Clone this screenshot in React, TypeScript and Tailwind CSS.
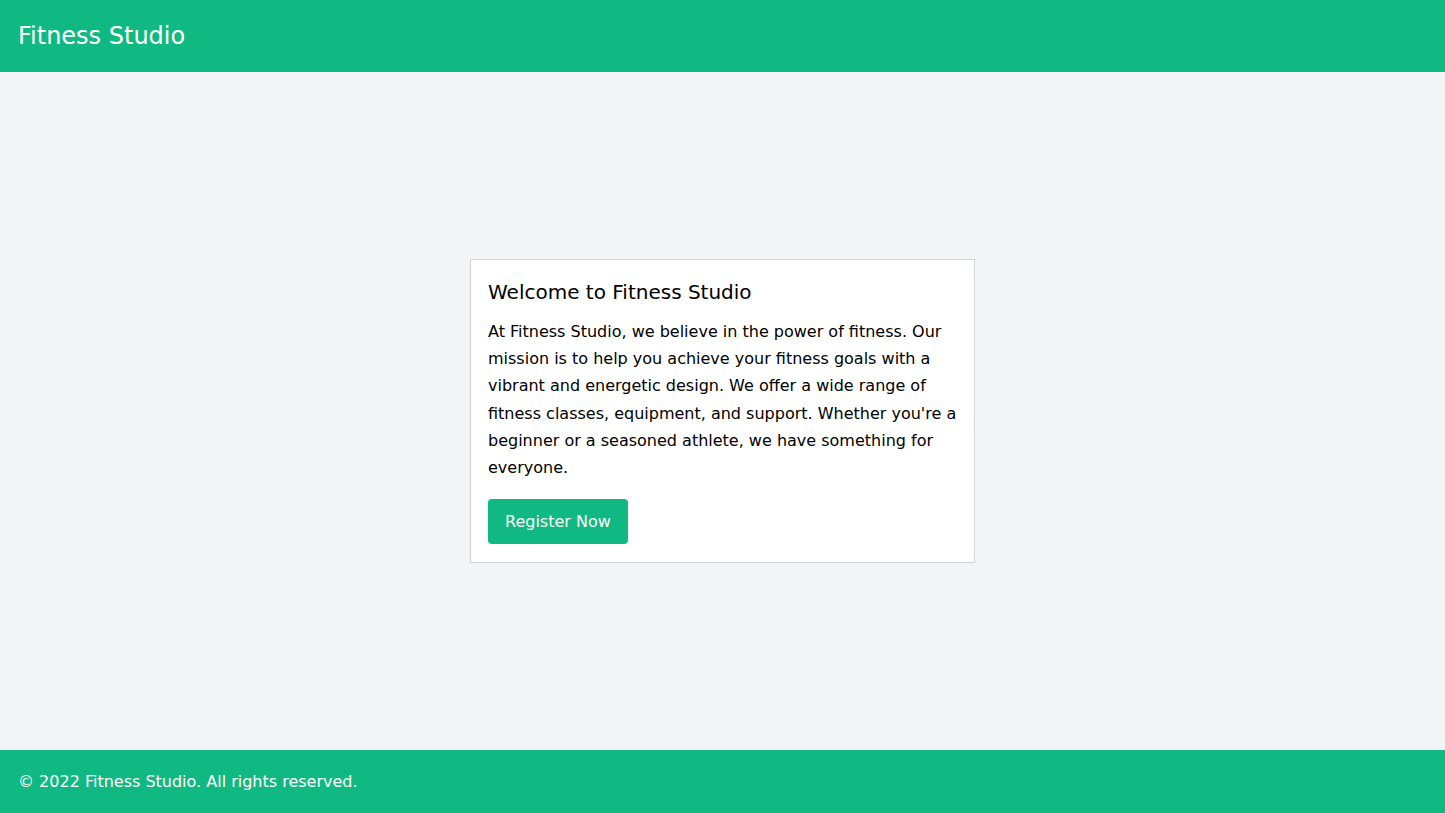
import React from 'react';

export default function App() {
  return (
    <div className="min-h-screen flex flex-col bg-[#f3f4f6] text-black" style={{ fontFamily: '"DejaVu Sans", sans-serif' }}>
      {/* Header */}
      <header className="bg-[#10b981] h-[72px] px-[18px] flex items-center">
        <h1 className="text-2xl text-white">Fitness Studio</h1>
      </header>

      {/* Main */}
      <main className="flex-1 flex items-center justify-center">
        <div className="w-[505px] bg-white border border-[#d1d5db] px-[17px] pt-[18px] pb-[18px]">
          <h2 className="text-xl mb-3">Welcome to Fitness Studio</h2>
          <p className="text-base leading-[1.7] mb-[18px]">
            At Fitness Studio, we believe in the power of fitness. Our mission is to help you achieve your
            fitness goals with a vibrant and energetic design. We offer a wide range of fitness classes,
            equipment, and support. Whether you're a beginner or a seasoned athlete, we have something for
            everyone.
          </p>
          <button className="bg-[#10b981] text-white text-base px-[17px] h-[45px] rounded">
            Register Now
          </button>
        </div>
      </main>

      {/* Footer */}
      <footer className="bg-[#10b981] h-[63px] px-[18px] flex items-center">
        <p className="text-white text-base">© 2022 Fitness Studio. All rights reserved.</p>
      </footer>
    </div>
  );
}
